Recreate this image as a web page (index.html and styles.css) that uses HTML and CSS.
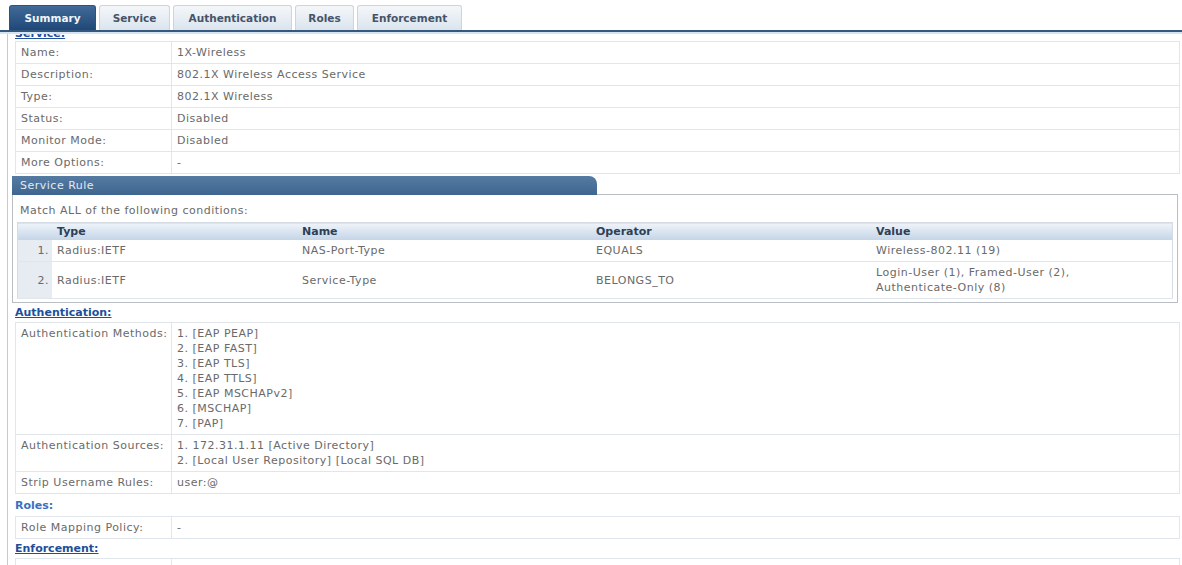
FILE: index.html
```html
<!DOCTYPE html>
<html>
<head>
<meta charset="utf-8">
<title>Summary</title>
<link rel="stylesheet" href="styles.css">
</head>
<body>
<div class="tabs">
  <div class="tab active t-summary">Summary</div>
  <div class="tab t-service">Service</div>
  <div class="tab t-auth">Authentication</div>
  <div class="tab t-roles">Roles</div>
  <div class="tab t-enf">Enforcement</div>
</div>
<div class="tabline"></div>
<div class="panel">
  <a class="heading clip">Service:</a>
  <table class="kv">
    <tr><td class="label">Name:</td><td>1X-Wireless</td></tr>
    <tr><td class="label">Description:</td><td>802.1X Wireless Access Service</td></tr>
    <tr><td class="label">Type:</td><td>802.1X Wireless</td></tr>
    <tr><td class="label">Status:</td><td>Disabled</td></tr>
    <tr><td class="label">Monitor Mode:</td><td>Disabled</td></tr>
    <tr><td class="label">More Options:</td><td>-</td></tr>
  </table>
  <div class="rule">
    <div class="rule-top"><div class="rule-title">Service Rule</div><div class="rule-fill"></div></div>
    <div class="rule-body">
      <div class="match">Match ALL of the following conditions:</div>
      <table class="cond">
        <tr><th class="num"></th><th class="c-type">Type</th><th class="c-name">Name</th><th class="c-op">Operator</th><th>Value</th></tr>
        <tr><td class="num">1.</td><td>Radius:IETF</td><td>NAS-Port-Type</td><td>EQUALS</td><td>Wireless-802.11 (19)</td></tr>
        <tr><td class="num">2.</td><td>Radius:IETF</td><td>Service-Type</td><td>BELONGS_TO</td><td>Login-User (1), Framed-User (2),<br>Authenticate-Only (8)</td></tr>
      </table>
    </div>
  </div>
  <a class="heading">Authentication:</a>
  <table class="kv">
    <tr><td class="label">Authentication Methods:</td><td>1. [EAP PEAP]<br>2. [EAP FAST]<br>3. [EAP TLS]<br>4. [EAP TTLS]<br>5. [EAP MSCHAPv2]<br>6. [MSCHAP]<br>7. [PAP]</td></tr>
    <tr><td class="label">Authentication Sources:</td><td>1. 172.31.1.11 [Active Directory]<br>2. [Local User Repository] [Local SQL DB]</td></tr>
    <tr><td class="label">Strip Username Rules:</td><td>user:@</td></tr>
  </table>
  <a class="heading light">Roles:</a>
  <table class="kv">
    <tr><td class="label">Role Mapping Policy:</td><td>-</td></tr>
  </table>
  <a class="heading">Enforcement:</a>
  <table class="kv">
    <tr><td class="label">&nbsp;</td><td>&nbsp;</td></tr>
  </table>
</div>
</body>
</html>
```
FILE: styles.css
```css
html, body {
  margin: 0;
  padding: 0;
  background: #fff;
}
body {
  font-family: "DejaVu Sans", Verdana, sans-serif;
  font-size: 11px;
  letter-spacing: 0.5px;
  color: #6a6a6a;
  overflow: hidden;
}
.tabs {
  display: flex;
  gap: 3px;
  padding: 5px 0 0 9px;
  height: 25px;
}
.tab {
  box-sizing: border-box;
  text-align: center;
  line-height: 24px;
  font-size: 10.5px;
  font-weight: bold;
  letter-spacing: 0;
  white-space: nowrap;
  color: #45546a;
  background: linear-gradient(#f4f7fa, #dbe4ee);
  border: 1px solid #cbd5e0;
  border-bottom: none;
  border-radius: 3px 3px 0 0;
}
.t-summary { width: 87px; }
.t-service { width: 71px; }
.t-auth { width: 119px; }
.t-roles { width: 59px; }
.t-enf { width: 105px; }
.tab.active {
  background: linear-gradient(#426a98, #1f4878);
  border-color: #2a5283;
  color: #f2f5f9;
}
.tabline {
  height: 2px;
  background: #35587f;
  border-bottom: 2px solid #d6e3f0;
}
.panel {
  margin-left: 7px;
  border-left: 1px solid #c6cbd1;
  padding: 0 2px 0 7px;
  height: 531px;
  overflow: hidden;
}
.heading {
  display: block;
  font-weight: bold;
  color: #1d4f9b;
  text-decoration: underline;
  line-height: 14px;
  letter-spacing: 0;
  margin: 3px 0 2px;
}
.heading.clip {
  margin: -7px 0 0;
}
.heading.light {
  color: #3b6fc2;
  text-decoration: none;
  margin: 5px 0 3px;
}
.kv {
  width: 100%;
  border-collapse: collapse;
}
.kv td {
  padding: 3px 4px 3px 5px;
  line-height: 15px;
  border: 1px solid #e1e6ec;
  vertical-align: top;
}
.kv td.label {
  width: 147px;
  padding-right: 3px;
  white-space: nowrap;
}
.rule {
  margin: 2px 2px 0 -3px;
}
.rule-top {
  display: flex;
  height: 19px;
}
.rule-title {
  width: 585px;
  box-sizing: border-box;
  padding-left: 8px;
  line-height: 19px;
  color: #e2eaf3;
  background: linear-gradient(#557ba2, #3f6690);
  border-radius: 0 8px 0 0;
}
.rule-fill {
  flex: 1;
  border-bottom: 1px solid #b9bec4;
}
.rule-body {
  border: 1px solid #b9bec4;
  border-top: none;
  padding: 8px 4px 3px;
}
.match {
  line-height: 15px;
  padding-left: 3px;
  margin-bottom: 4px;
}
.cond {
  width: 100%;
  border-collapse: collapse;
  border: 1px solid #d5dce4;
}
.cond th {
  height: 17px;
  padding: 0 5px;
  text-align: left;
  font-weight: bold;
  letter-spacing: 0;
  color: #2d3f57;
  background: linear-gradient(#eef3f9, #c3d4e7);
}
.cond td {
  padding: 3px 5px;
  line-height: 15px;
  border-bottom: 1px solid #e1e6ec;
  vertical-align: middle;
}
.cond .num {
  width: 26px;
  text-align: right;
  background: #e7ecf2;
  padding-right: 3px;
}
.cond th.num {
  background: linear-gradient(#eef3f9, #c3d4e7);
}
.cond .c-type {
  width: 235px;
}
.cond .c-name {
  width: 284px;
}
.cond .c-op {
  width: 270px;
}
```
